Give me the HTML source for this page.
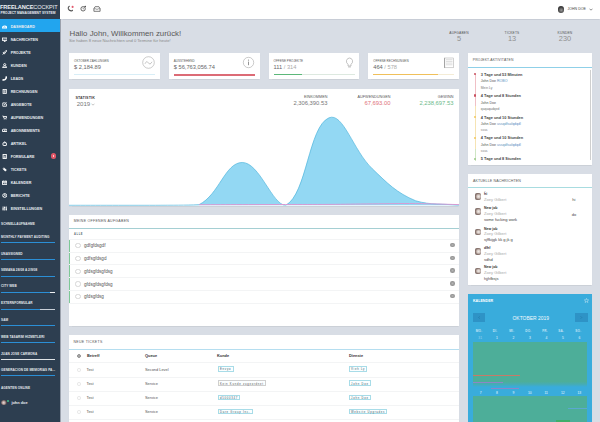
<!DOCTYPE html>
<html><head><meta charset="utf-8">
<style>
*{box-sizing:border-box;margin:0;padding:0}
html,body{width:600px;height:422px;overflow:hidden;background:#d8dde5;font-family:"Liberation Sans",sans-serif;color:#555}
.a{position:absolute;white-space:nowrap}
#side{position:absolute;left:0;top:0;width:59.6px;height:422px;background:#2d3e50;box-shadow:0.4px 0 0 #3a4352,1.4px 0 0 #dde2ea}
.logo1{left:0;top:4px;font-size:5.6px;color:#eef1f4;font-weight:bold;letter-spacing:-0.1px}
.logo2{left:0.5px;top:11.3px;font-size:3.3px;color:#e8ecf0;font-weight:bold}
.act{position:absolute;left:0;top:19px;width:60px;height:13px;background:#22a5ee}
.nav{left:10.7px;font-size:3.72px;font-weight:bold;color:#e9edf1;line-height:4px;margin-top:0.5px}
.ic{position:absolute;left:2px;width:4.5px;height:4px;border:0.9px solid #fff;border-radius:0.5px}
.pl{left:1px;font-size:3.1px;font-weight:bold;color:#e6eaee;line-height:3px;letter-spacing:0.1px}
.pb{position:absolute;left:1px;width:54px;height:1.2px;background:#2b8fd6}
#top{position:absolute;left:60px;top:0;width:540px;height:18.9px;background:#fff;box-shadow:0 0.5px 1px rgba(60,70,90,0.10)}
.card{position:absolute;background:#fff;box-shadow:0 0.5px 1px rgba(0,0,0,0.06)}
.lbl{font-size:3px;color:#555;letter-spacing:0.05px}
.val{font-size:5.7px;color:#666;margin-top:0.8px}
.bar{position:absolute;height:1px}
.hdr{font-size:3.2px;color:#555;letter-spacing:0.15px}
.hline{position:absolute;left:0;right:0;height:0.8px;background:#8fd0e8}
.row{position:absolute;left:0;right:0;height:0.5px;background:#f3f4f5}
.tt{font-size:4.6px;color:#555;line-height:5px;margin-top:-0.8px}
.chk{position:absolute;width:5.3px;height:5.3px;border:0.45px solid #d6d6d6;border-radius:50%;margin:-0.6px 0 0 -0.6px}
.dot{position:absolute;width:4.4px;height:4.4px;border-radius:50%;background:radial-gradient(circle,#b5b5b5 0,#9a9a9a 45%,#8e8e8e 100%);margin:-0.8px 0 0 -0.6px}
.th{font-size:3.9px;color:#333;font-weight:bold;margin-top:0.2px}
.td{font-size:3.9px;color:#555;margin-top:-0.7px}
.badge{position:absolute;height:5.5px;border:0.45px solid #a8dce8;font-size:2.75px;color:#35606c;line-height:3px;padding:1.2px 1.3px 0;letter-spacing:0.72px;white-space:nowrap;margin-top:-1.3px;background:#fbfeff}
.msgn{font-size:3.5px;color:#333;font-weight:bold}
.msgs{font-size:4.1px;color:#aaa}
.msgt{font-size:4px;color:#444}
.av{position:absolute;width:6.2px;height:6.6px;border-radius:2px;background:radial-gradient(ellipse at 60% 50%,#f0ebe8 0,#d8ccc6 30%,#8a7670 62%,#5a4a46 100%)}
.calw{font-size:3.1px;color:#c6e5f6;font-weight:bold;margin-left:-0.8px;margin-top:-0.5px;letter-spacing:0.25px}
.cald{font-size:3.3px;color:#eef8fd;margin-top:-0.3px}
</style></head><body>

<div id="side">
  <div class="a logo1">FREELANCE<span style="font-weight:normal">COCKPIT</span></div>
  <div class="a logo2">PROJECT MANAGEMENT SYSTEM</div>
  <div class="act"></div>
  <div class="a nav" style="top:24px">DASHBOARD</div>
  <div class="a nav" style="top:37px">NACHRICHTEN</div>
  <div class="a nav" style="top:50px">PROJEKTE</div>
  <div class="a nav" style="top:63px">KUNDEN</div>
  <div class="a nav" style="top:76px">LEADS</div>
  <div class="a nav" style="top:89px">RECHNUNGEN</div>
  <div class="a nav" style="top:102px">ANGEBOTE</div>
  <div class="a nav" style="top:115px">AUFWENDUNGEN</div>
  <div class="a nav" style="top:128px">ABONNEMENTS</div>
  <div class="a nav" style="top:141px">ARTIKEL</div>
  <div class="a nav" style="top:154px">FORMULARE</div>
  <div class="a nav" style="top:167px">TICKETS</div>
  <div class="a nav" style="top:180px">KALENDER</div>
  <div class="a nav" style="top:193px">BERICHTE</div>
  <div class="a nav" style="top:206px">EINSTELLUNGEN</div>
  <div style="position:absolute;left:50.6px;top:153.2px;width:5.6px;height:5.6px;border-radius:50%;background:#e25768"><div style="position:absolute;left:2.5px;top:1.5px;width:0.6px;height:2.6px;background:#f6c8ce"></div></div>

  <svg style="position:absolute;left:2px;top:23.5px" width="5.4" height="5" viewBox="0 0 10 10" preserveAspectRatio="none"><path d="M1 8 A4 4 0 0 1 9 8 Z" fill="none" stroke="#fff" stroke-width="1.95"/><path d="M5 8 L7 4.5" stroke="#fff" stroke-width="1.50"/></svg>
  <svg style="position:absolute;left:2px;top:36.5px" width="5.4" height="5" viewBox="0 0 10 10" preserveAspectRatio="none"><rect x="0.8" y="2" width="8.4" height="5" fill="none" stroke="#fff" stroke-width="1.65"/><path d="M3.5 9 H6.5 M5 7 V9" stroke="#fff" stroke-width="1.50"/><path d="M2.5 5 L4 3.8 L5.5 4.8 L7.5 3.2" fill="none" stroke="#fff" stroke-width="1.05"/></svg>
  <svg style="position:absolute;left:2px;top:49.5px" width="5.4" height="5" viewBox="0 0 10 10" preserveAspectRatio="none"><path d="M2.5 7.5 L4 4.5 Q6.5 1.5 9 1 Q8.5 3.5 5.5 6 Z" fill="none" stroke="#fff" stroke-width="1.65"/><path d="M1 9 L3 7" stroke="#fff" stroke-width="1.50"/><path d="M1.5 5 L3.8 4.8 M5.2 6.2 L5 8.5" stroke="#fff" stroke-width="1.35"/></svg>
  <svg style="position:absolute;left:2px;top:62.5px" width="5.4" height="5" viewBox="0 0 10 10" preserveAspectRatio="none"><circle cx="5" cy="3.2" r="2" fill="none" stroke="#fff" stroke-width="1.65"/><path d="M1 9 Q1.5 5.8 5 5.8 Q8.5 5.8 9 9 Z" fill="none" stroke="#fff" stroke-width="1.65"/></svg>
  <svg style="position:absolute;left:2px;top:75.5px" width="5.4" height="5" viewBox="0 0 10 10" preserveAspectRatio="none"><path d="M0.6 9 Q0.2 6 2.6 5.9 L4 6.6 Q6 5.4 6.6 3.6 L6 2.2 Q6.2 0.4 9.4 0.8 Q9.9 5.4 6.9 7.9 Q3.8 10.4 0.6 9 Z" fill="#fff"/></svg>
  <svg style="position:absolute;left:2px;top:88.5px" width="5.4" height="5" viewBox="0 0 10 10" preserveAspectRatio="none"><rect x="2" y="1" width="6" height="8" fill="none" stroke="#fff" stroke-width="1.65"/><path d="M3.5 3.2 H6.5 M3.5 5 H6.5 M3.5 6.8 H6.5" stroke="#fff" stroke-width="1.20"/></svg>
  <svg style="position:absolute;left:2px;top:101.5px" width="5.4" height="5" viewBox="0 0 10 10" preserveAspectRatio="none"><path d="M7 1.8 H1.5 V8.5 H8.2 V4" fill="none" stroke="#fff" stroke-width="1.65"/><path d="M3.8 6.2 L8.8 1.2" stroke="#fff" stroke-width="1.80"/></svg>
  <svg style="position:absolute;left:2px;top:114.5px" width="5.4" height="5" viewBox="0 0 10 10" preserveAspectRatio="none"><path d="M0.8 2 H2.5 L3.5 6.5 H8 L9 3 H3" fill="none" stroke="#fff" stroke-width="1.65"/><circle cx="4" cy="8.3" r="0.9" fill="#fff"/><circle cx="7.5" cy="8.3" r="0.9" fill="#fff"/></svg>
  <svg style="position:absolute;left:2px;top:127.5px" width="5.4" height="5" viewBox="0 0 10 10" preserveAspectRatio="none"><path d="M0.8 4 Q0.8 2.5 2.5 2.5 H7.5 Q9.2 2.5 9.2 4 V7 H0.8 Z" fill="none" stroke="#fff" stroke-width="1.80"/><rect x="3.5" y="4.2" width="3" height="1.4" fill="#fff"/></svg>
  <svg style="position:absolute;left:2px;top:140.5px" width="5.4" height="5" viewBox="0 0 10 10" preserveAspectRatio="none"><rect x="1.8" y="3.5" width="6.4" height="5.5" rx="0.8" fill="none" stroke="#fff" stroke-width="1.80"/><path d="M3.5 3.5 V2.5 Q5 0.6 6.5 2.5 V3.5" fill="none" stroke="#fff" stroke-width="1.50"/></svg>
  <svg style="position:absolute;left:2px;top:153.5px" width="5.4" height="5" viewBox="0 0 10 10" preserveAspectRatio="none"><rect x="2" y="1" width="6" height="8" fill="none" stroke="#fff" stroke-width="1.80"/><path d="M3.5 4.5 H6.5" stroke="#fff" stroke-width="1.50"/><path d="M4 9 V6.8 H6 V9" fill="none" stroke="#fff" stroke-width="1.20"/></svg>
  <svg style="position:absolute;left:2px;top:166.5px" width="5.4" height="5" viewBox="0 0 10 10" preserveAspectRatio="none"><path d="M1 3.5 L3.5 1 L9 6 L6 9 Z" fill="#fff"/><circle cx="3.3" cy="3.3" r="0.7" fill="#2c3a4b"/></svg>
  <svg style="position:absolute;left:2px;top:179.5px" width="5.4" height="5" viewBox="0 0 10 10" preserveAspectRatio="none"><rect x="1" y="2.5" width="8" height="6.5" fill="none" stroke="#fff" stroke-width="1.65"/><path d="M1 4.5 H9" stroke="#fff" stroke-width="1.80"/><path d="M3 1 V3 M7 1 V3" stroke="#fff" stroke-width="1.35"/><rect x="3" y="5.8" width="4" height="1.2" fill="#fff"/></svg>
  <svg style="position:absolute;left:2px;top:192.5px" width="5.4" height="5" viewBox="0 0 10 10" preserveAspectRatio="none"><circle cx="5" cy="5" r="3.8" fill="none" stroke="#fff" stroke-width="1.65"/><path d="M5 5 L5 1.2 M5 5 L8.5 6.5 M5 5 L2 7.5" stroke="#fff" stroke-width="1.35"/></svg>
  <svg style="position:absolute;left:2px;top:205.5px" width="5.4" height="5" viewBox="0 0 10 10" preserveAspectRatio="none"><path d="M2 1 V9 M5 1 V9 M8 1 V9" stroke="#fff" stroke-width="1.65"/><path d="M1 6 H3 M4 3 H6 M7 6.5 H9" stroke="#fff" stroke-width="1.95"/></svg>
  <div class="a pl" style="top:222.6px">SCHNELLAUFNAHME</div>
  <div class="a pl" style="top:236.3px">MONTHLY PAYMENT AUDITING</div>
  <div class="pb" style="top:242px"></div>
  <div class="a pl" style="top:252.6px">UNASSIGNED</div>
  <div class="pb" style="top:259px"></div>
  <div class="a pl" style="top:269.1px">SEMANA 28/08 A 2/9/08</div>
  <div class="pb" style="top:275.6px"></div>
  <div class="a pl" style="top:285.3px">CITY WEB</div>
  <div class="pb" style="top:291.8px;background:linear-gradient(90deg,#2b8fd6 90%,#eef0f2 90%)"></div>
  <div class="a pl" style="top:302.3px">EXTERNFORMULAR</div>
  <div class="pb" style="top:309px;background:linear-gradient(90deg,#2b8fd6 73%,#c9d0d8 73%)"></div>
  <div class="a pl" style="top:319.0px">SAM</div>
  <div class="pb" style="top:325.2px"></div>
  <div class="a pl" style="top:336.1px">WEB TASARIM HIZMETLERI</div>
  <div class="pb" style="top:342.3px"></div>
  <div class="a pl" style="top:352.6px">JUAN JOSE CARMONA</div>
  <div class="pb" style="top:358.8px;background:#dfe3e6"></div>
  <div class="a pl" style="top:368.8px">GENERACION DE MEMORIAS PA...</div>
  <div class="pb" style="top:375.3px"></div>
  <div class="a pl" style="top:387.3px">AGENTEN ONLINE</div>
  <div style="position:absolute;left:1.2px;top:399.8px;width:5.6px;height:5.6px;border-radius:50%;background:radial-gradient(circle at 45% 55%,#e8dcd8 0,#bfa9a6 30%,#5a4a4c 65%,#2d3e50 100%)"></div>
  <div style="position:absolute;left:6.6px;top:399.6px;width:2px;height:2px;border-radius:50%;background:#3fbf8a"></div>
  <div class="a" style="top:400.6px;left:11.4px;font-size:3.9px;font-weight:bold;color:#e6e9ee;line-height:4px">john doe</div>
</div>

<div id="top">
  <svg style="position:absolute;left:6.5px;top:5px" width="8" height="7" viewBox="0 0 8 7"><path d="M2.3 1.3 Q0.9 1.9 1.3 3.7 Q2 5.5 4.1 5.9 Q5.2 6 5.5 5.2" fill="none" stroke="#505050" stroke-width="1.1" stroke-linecap="round"/><circle cx="5.6" cy="1.9" r="1.05" fill="#e25a6e"/></svg>
  <svg style="position:absolute;left:19.6px;top:5px" width="7" height="7" viewBox="0 0 7 7"><circle cx="3.1" cy="3.8" r="2.2" fill="none" stroke="#505050" stroke-width="0.85"/><path d="M3.1 2.7 V3.9 H3.9" fill="none" stroke="#505050" stroke-width="0.55"/><circle cx="5.2" cy="1.5" r="0.75" fill="#333"/></svg>
  <svg style="position:absolute;left:32.6px;top:5.6px" width="8" height="6" viewBox="0 0 8 6"><path d="M0.9 2.6 L2.1 0.7 H5.9 L7.1 2.6 V5.3 H0.9 Z" fill="none" stroke="#505050" stroke-width="0.75" stroke-linejoin="round"/><path d="M0.9 2.8 H2.7 Q4 4.1 5.3 2.8 H7.1" fill="none" stroke="#505050" stroke-width="0.6"/></svg>
  <div style="position:absolute;left:497.5px;top:6.3px;width:6.3px;height:6.3px;border-radius:50%;background:radial-gradient(circle at 55% 60%,#9a9a9a 0,#6a6a6a 30%,#3a3a3a 60%,#2a2a2a 100%)"></div>
  <div class="a" style="left:507.5px;top:7.4px;font-size:3.55px;color:#444">JOHN DOE</div>
  <svg style="position:absolute;left:529px;top:8px" width="4" height="3" viewBox="0 0 4 3"><path d="M0.5 0.7 L2 2.2 L3.5 0.7" fill="none" stroke="#444" stroke-width="0.6"/></svg>
</div>

<div class="a" style="left:69.6px;top:28.6px;font-size:7.85px;color:#585858">Hallo John, Willkommen zurück!</div>
<div class="a" style="left:69px;top:38.3px;font-size:4.15px;color:#8a8a8a">Sie haben 8 neue Nachrichten und 0 Termine für heute!</div>

<div class="a" style="left:448px;top:30.6px;width:22px;text-align:center;font-size:3.3px;letter-spacing:0.15px;color:#555">AUFGABEN</div>
<div class="a" style="left:448px;top:34px;width:22px;text-align:center;font-size:7.4px;color:#8f8f8f">5</div>
<div class="a" style="left:501px;top:30.6px;width:22px;text-align:center;font-size:3.3px;letter-spacing:0.15px;color:#555">TICKETS</div>
<div class="a" style="left:501px;top:34px;width:22px;text-align:center;font-size:7.4px;color:#8f8f8f">13</div>
<div class="a" style="left:554px;top:30.6px;width:22px;text-align:center;font-size:3.3px;letter-spacing:0.15px;color:#555">KUNDEN</div>
<div class="a" style="left:554px;top:34px;width:22px;text-align:center;font-size:7.4px;color:#8f8f8f">230</div>

<!-- stat cards -->
<div class="card" style="left:69px;top:53.2px;width:90.75px;height:26.2px">
  <div class="a lbl" style="left:5px;top:5.8px">OKTOBER ZAHLUNGEN</div>
  <div class="a val" style="left:5px;top:10.3px">$ 2,184.89</div>
  <div class="bar" style="left:5px;top:21px;width:81px;background:#d8eef7"></div>
  <svg style="position:absolute;left:73.4px;top:3px" width="13" height="13" viewBox="0 0 13 13"><circle cx="6.5" cy="6.5" r="5.8" fill="none" stroke="#999" stroke-width="0.5"/><path d="M3 7.8 Q4.6 4.2 6.3 6.8 Q8 9.6 10 5.8" fill="none" stroke="#999" stroke-width="0.55"/></svg>
</div>
<div class="card" style="left:168.75px;top:53.2px;width:90.75px;height:26.2px">
  <div class="a lbl" style="left:5px;top:5.8px">AUSSTEHEND</div>
  <div class="a val" style="left:5px;top:10.3px">$ 56,763,056.74</div>
  <div class="bar" style="left:5px;top:20.9px;width:81px;height:1.7px;background:#dc6b76"></div>
  <svg style="position:absolute;left:73.4px;top:2.9px" width="13" height="13" viewBox="0 0 13 13"><circle cx="6.5" cy="6.5" r="5.2" fill="none" stroke="#999" stroke-width="0.5"/><rect x="6.05" y="5.6" width="0.9" height="3.6" fill="#888"/><circle cx="6.5" cy="4.1" r="0.6" fill="#888"/></svg>
</div>
<div class="card" style="left:268.5px;top:53.2px;width:90.75px;height:26.2px">
  <div class="a lbl" style="left:5px;top:5.8px">OFFENE PROJEKTE</div>
  <div class="a val" style="left:5px;top:10.3px">111 <span style="color:#aaa">/ 314</span></div>
  <div class="bar" style="left:5px;top:21px;width:81px;background:#dde9e0"></div>
  <div class="bar" style="left:5px;top:20.7px;width:28px;height:1.3px;background:#5cb87a"></div>
  <svg style="position:absolute;left:74.6px;top:3.2px" width="13" height="13" viewBox="0 0 13 13"><path d="M5 10 V8.3 Q3 6.8 3.5 4.5 Q4.3 2 6.5 2 Q8.7 2 9.5 4.5 Q10 6.8 8 8.3 V10 Z M5.2 11 H7.8" fill="none" stroke="#888" stroke-width="0.5"/></svg>
</div>
<div class="card" style="left:368.25px;top:53.2px;width:90.75px;height:26.2px">
  <div class="a lbl" style="left:5px;top:5.8px">OFFENE RECHNUNGEN</div>
  <div class="a val" style="left:5px;top:10.3px">464 <span style="color:#aaa">/ 578</span></div>
  <div class="bar" style="left:5px;top:21px;width:81px;background:#f4ecd6"></div>
  <div class="bar" style="left:5px;top:20.7px;width:65px;height:1.3px;background:#f0c05a"></div>
  <svg style="position:absolute;left:74px;top:3px" width="13" height="13" viewBox="0 0 13 13"><rect x="2.3" y="2" width="9.4" height="9.8" fill="none" stroke="#999" stroke-width="0.45"/><path d="M2.6 2.2 V11.6" stroke="#999" stroke-width="0.9"/><path d="M4 3.7 H10.5 M4 5.4 H10.5 M4 7.1 H10.5 M4 8.8 H10.5" stroke="#aaa" stroke-width="0.4"/></svg>
</div>


<!-- chart card -->
<div class="card" style="left:69px;top:89.2px;width:390px;height:116.6px;overflow:hidden">
  <div class="a" style="left:6.4px;top:7.2px;font-size:3.7px;color:#444;font-weight:bold;letter-spacing:0.12px">STATISTIK</div>
  <div class="a" style="left:7.7px;top:10.6px;font-size:6.1px;color:#777">2019</div>
  <svg style="position:absolute;left:22.4px;top:13.5px" width="4" height="3" viewBox="0 0 4 3"><path d="M0.5 0.7 L2 2.2 L3.5 0.7" fill="none" stroke="#888" stroke-width="0.5"/></svg>
  <div class="a" style="left:208px;top:6.3px;width:50.5px;text-align:right;font-size:3.75px;letter-spacing:0.05px;color:#555">EINKOMMEN</div>
  <div class="a" style="left:208px;top:10.6px;width:50.5px;text-align:right;font-size:5.85px;color:#777">2,306,390.53</div>
  <div class="a" style="left:271px;top:6.3px;width:50.5px;text-align:right;font-size:3.75px;letter-spacing:0.05px;color:#555">AUFWENDUNGEN</div>
  <div class="a" style="left:271px;top:10.6px;width:50.5px;text-align:right;font-size:5.85px;color:#e0707a">67,693.00</div>
  <div class="a" style="left:334px;top:6.3px;width:50.5px;text-align:right;font-size:3.75px;letter-spacing:0.05px;color:#555">GEWINN</div>
  <div class="a" style="left:334px;top:10.6px;width:50.5px;text-align:right;font-size:5.85px;color:#6cb98a">2,238,697.53</div>
  <!--CHART--><svg style="position:absolute;left:0;top:0" width="390" height="116.6" viewBox="69 89 390 116.6"><path d="M69.00 205.30 C86.33 205.30 95.00 205.30 112.33 205.30 C129.67 205.30 138.33 205.30 155.67 205.30 C173.00 205.18 184.53 205.30 199.00 204.70 C219.20 194.73 225.06 162.38 242.33 162.50 C259.73 162.62 272.35 205.30 285.67 205.30 C307.02 194.29 308.43 126.46 329.00 117.80 C343.10 111.86 353.13 150.41 372.33 168.80 C387.79 183.61 396.50 192.73 415.67 200.80 C431.17 205.30 441.67 203.50 459.00 205.30 L459.00 205.30 L69.00 205.30 Z" fill="#93d8f3"/><path d="M69.00 205.30 C86.33 205.30 95.00 205.30 112.33 205.30 C129.67 205.30 138.33 205.30 155.67 205.30 C173.00 205.18 184.53 205.30 199.00 204.70 C219.20 194.73 225.06 162.38 242.33 162.50 C259.73 162.62 272.35 205.30 285.67 205.30 C307.02 194.29 308.43 126.46 329.00 117.80 C343.10 111.86 353.13 150.41 372.33 168.80 C387.79 183.61 396.50 192.73 415.67 200.80 C431.17 205.30 441.67 203.50 459.00 205.30" fill="none" stroke="#52b6dc" stroke-width="0.7"/><path d="M199.00 204.70 C216.33 204.66 225.00 204.64 242.33 204.60 C259.67 204.56 268.33 204.54 285.67 204.50 C303.00 204.46 311.67 204.52 329.00 204.40 C346.33 204.28 355.00 204.06 372.33 203.90 C389.67 203.74 398.34 203.46 415.67 203.60 C433.00 203.74 441.67 204.20 459.00 204.60" fill="none" stroke="#d79bd2" stroke-width="1"/></svg>
</div>

<!-- tasks card -->
<div class="card" style="left:69px;top:215px;width:390px;height:110.5px">
  <div class="a hdr" style="left:4.7px;top:4.4px;font-size:3.5px;letter-spacing:0.3px">MEINE OFFENEN AUFGABEN</div>
  <div class="hline" style="top:13px;height:1.1px;background:#a5cfd3"></div>
  <div class="a" style="left:5px;top:17.6px;font-size:2.6px;color:#5a6a70;letter-spacing:0.6px;font-weight:bold">ALLE</div>
  <div style="position:absolute;left:0;top:24.3px;width:1.4px;height:63.5px;background:#7ec897"></div>
  <div class="row" style="top:23.5px"></div>
  <div class="row" style="top:36.5px"></div>
  <div class="row" style="top:49.3px"></div>
  <div class="row" style="top:62px"></div>
  <div class="row" style="top:74.8px"></div>
  <div class="row" style="top:87.5px"></div>
  <div class="chk" style="left:6.8px;top:28.6px"></div>
  <div class="chk" style="left:6.8px;top:41.3px"></div>
  <div class="chk" style="left:6.8px;top:54.1px"></div>
  <div class="chk" style="left:6.8px;top:66.9px"></div>
  <div class="chk" style="left:6.8px;top:79.6px"></div>
  <div class="a tt" style="left:15px;top:29px">gdfgfdsgdf</div>
  <div class="a tt" style="left:15px;top:41.7px">gdfsgfdsgd</div>
  <div class="a tt" style="left:15px;top:54.5px">gfdsgfdsgfdsg</div>
  <div class="a tt" style="left:15px;top:67.3px">gfdsgfdsgfdsg</div>
  <div class="a tt" style="left:15px;top:80px">gfdsgfdsg</div>
  <div class="dot" style="left:382px;top:28.7px"></div>
  <div class="dot" style="left:382px;top:41.4px"></div>
  <div class="dot" style="left:382px;top:54.2px"></div>
  <div class="dot" style="left:382px;top:67px"></div>
  <div class="dot" style="left:382px;top:79.7px"></div>
</div>

<!-- tickets card -->
<div class="card" style="left:69px;top:335px;width:390px;height:90px">
  <div class="a hdr" style="left:4.5px;top:5px;font-size:3.5px;letter-spacing:0.3px">NEUE TICKETS</div>
  <div class="hline" style="top:13.5px;height:1.4px;background:#b5def0"></div>
  <svg style="position:absolute;left:7.9px;top:18.6px" width="4" height="4" viewBox="0 0 8 8"><circle cx="4" cy="4" r="2.9" fill="none" stroke="#333" stroke-width="1.2"/><path d="M2 4 H6" stroke="#333" stroke-width="1.1"/></svg>
  <div class="a th" style="left:18px;top:17.8px">Betreff</div>
  <div class="a th" style="left:76px;top:17.8px">Queue</div>
  <div class="a th" style="left:148px;top:17.8px">Kunde</div>
  <div class="a th" style="left:280px;top:17.8px">Dienste</div>
  <div class="row" style="top:27.3px"></div>
  <div class="row" style="top:41.6px"></div>
  <div class="row" style="top:55.8px"></div>
  <div class="row" style="top:70px"></div>
  <div class="row" style="top:84px"></div>
  <div style="position:absolute;left:8.2px;top:33.1px;width:3.6px;height:3.6px;border-radius:50%;border:0.45px solid #e6e6e6"></div>
  <div style="position:absolute;left:8.2px;top:47.1px;width:3.6px;height:3.6px;border-radius:50%;border:0.45px solid #e6e6e6"></div>
  <div style="position:absolute;left:8.2px;top:61.4px;width:3.6px;height:3.6px;border-radius:50%;border:0.45px solid #e6e6e6"></div>
  <div style="position:absolute;left:8.2px;top:75.4px;width:3.6px;height:3.6px;border-radius:50%;border:0.45px solid #e6e6e6"></div>
  <div class="a td" style="left:17.5px;top:32.6px">Test</div>
  <div class="a td" style="left:17.5px;top:46.8px">Test</div>
  <div class="a td" style="left:17.5px;top:61px">Test</div>
  <div class="a td" style="left:17.5px;top:75px">Test</div>
  <div class="a td" style="left:76px;top:32.6px">Second Level</div>
  <div class="a td" style="left:76px;top:46.8px">Service</div>
  <div class="a td" style="left:76px;top:61px">Service</div>
  <div class="a td" style="left:76px;top:75px">Service</div>
  <div class="badge" style="left:148.7px;top:32.5px">Envyo</div>
  <div class="badge" style="left:148.7px;top:46.7px;border-color:#cfcfcf;color:#555">Kein Kunde zugeordnet</div>
  <div class="badge" style="left:148.7px;top:60.9px">d5000347</div>
  <div class="badge" style="left:148.7px;top:74.9px">Dare Group Inc.</div>
  <div class="badge" style="left:279.8px;top:32.5px">Vieh Ly</div>
  <div class="badge" style="left:279.8px;top:46.7px">John Doe</div>
  <div class="badge" style="left:279.8px;top:60.9px">John Doe</div>
  <div class="badge" style="left:279.8px;top:74.9px">Website Upgrades</div>
</div>

<!-- right column -->
<div class="card" style="left:468px;top:53.4px;width:124px;height:111.3px">
  <div class="a hdr" style="left:4.8px;top:4.7px;font-size:3.4px;letter-spacing:0.12px">PROJEKT-AKTIVITÄTEN</div>
  <div class="hline" style="top:13.4px;background:#8fd0e8"></div>
  <div style="position:absolute;left:121.8px;top:17px;width:0.8px;height:89.5px;background:#cfcfcf"></div>
  <div style="position:absolute;left:6.6px;top:21px;width:0.5px;height:32px;background:#f0c0c6"></div>
  <div style="position:absolute;left:6.6px;top:53px;width:0.5px;height:43px;background:#f6e4b4"></div>
  <div style="position:absolute;left:6.6px;top:96px;width:0.5px;height:12px;background:#cfe6c4"></div>
  <div style="position:absolute;left:5.75px;top:19.8px;width:2.2px;height:2.2px;border-radius:50%;background:#c9505f"></div>
  <div style="position:absolute;left:5.75px;top:41.1px;width:2.2px;height:2.2px;border-radius:50%;background:#c9505f"></div>
  <div style="position:absolute;left:5.75px;top:62.4px;width:2.2px;height:2.2px;border-radius:50%;background:#f0c860"></div>
  <div style="position:absolute;left:5.75px;top:83.2px;width:2.2px;height:2.2px;border-radius:50%;background:#f0c860"></div>
  <div style="position:absolute;left:5.75px;top:104.3px;width:2.2px;height:2.2px;border-radius:50%;background:#9bc98a"></div>
  <div class="a" style="left:12.8px;top:19.6px;font-size:3.9px;line-height:4px;color:#444;font-weight:bold">3 Tage und 53 Minuten</div>
  <div class="a" style="left:12.8px;top:26.0px;font-size:3.55px;line-height:4px;color:#555">John Doe <span style="color:#5a8fc0">ROBO</span></div>
  <div class="a" style="left:12.8px;top:32.2px;font-size:3.35px;line-height:4px;color:#777">Mein Ly</div>
  <div class="a" style="left:12.8px;top:40.9px;font-size:3.9px;line-height:4px;color:#444;font-weight:bold">4 Tage und 8 Stunden</div>
  <div class="a" style="left:12.8px;top:47.3px;font-size:3.55px;line-height:4px;color:#555">John Doe</div>
  <div class="a" style="left:12.8px;top:53.5px;font-size:3.35px;line-height:4px;color:#777">qaqaqadqed</div>
  <div class="a" style="left:12.8px;top:62.3px;font-size:3.9px;line-height:4px;color:#444;font-weight:bold">4 Tage und 10 Stunden</div>
  <div class="a" style="left:12.8px;top:68.7px;font-size:3.55px;line-height:4px;color:#555">John Doe <span style="color:#5a8fc0">ussqdfsafqdqdl</span></div>
  <div class="a" style="left:12.8px;top:74.9px;font-size:3.35px;line-height:4px;color:#777">ssss</div>
  <div class="a" style="left:12.8px;top:83.0px;font-size:3.9px;line-height:4px;color:#444;font-weight:bold">4 Tage und 10 Stunden</div>
  <div class="a" style="left:12.8px;top:89.4px;font-size:3.55px;line-height:4px;color:#555">John Doe <span style="color:#5a8fc0">ussqdfsafqdqdl</span></div>
  <div class="a" style="left:12.8px;top:95.6px;font-size:3.35px;line-height:4px;color:#777">ssss</div>
  <div class="a" style="left:12.8px;top:104.1px;font-size:3.9px;line-height:4px;color:#444;font-weight:bold">5 Tage und 8 Stunden</div>
</div>

<div class="card" style="left:468px;top:173.8px;width:124px;height:111px">
  <div class="a hdr" style="left:5px;top:4.8px;font-size:3.6px;letter-spacing:0.12px">AKTUELLE NACHRICHTEN</div>
  <div class="hline" style="top:13.4px;background:#a8dce0"></div>
  <div class="av" style="left:7px;top:19.7px"></div>
  <div class="av" style="left:7px;top:34.2px"></div>
  <div class="av" style="left:7px;top:54.8px"></div>
  <div class="av" style="left:7px;top:74.3px"></div>
  <div class="av" style="left:7px;top:93.9px"></div>
  <div class="a msgt" style="left:16.0px;top:15.70px;line-height:5px;font-size:2.4px">:)</div>
  <div class="a msgn" style="left:16.0px;top:18.20px;line-height:5px">hi</div>
  <div class="a msgs" style="left:16.0px;top:23.20px;line-height:5px">Zoey Gilbert</div>
  <div class="a msgn" style="left:16.0px;top:32.70px;line-height:5px">New job</div>
  <div class="a msgs" style="left:16.0px;top:37.70px;line-height:5px">Zoey Gilbert</div>
  <div class="a msgt" style="left:16.0px;top:43.50px;line-height:5px">some fucking work</div>
  <div class="a msgn" style="left:16.0px;top:53.20px;line-height:5px">New job</div>
  <div class="a msgs" style="left:16.0px;top:57.70px;line-height:5px">Zoey Gilbert</div>
  <div class="a msgt" style="left:16.0px;top:63.50px;line-height:5px">sjffkijgk kk g jk g</div>
  <div class="a msgn" style="left:16.0px;top:72.50px;line-height:5px">dlhf</div>
  <div class="a msgs" style="left:16.0px;top:77.50px;line-height:5px">Zoey Gilbert</div>
  <div class="a msgt" style="left:16.0px;top:83.30px;line-height:5px">sdhd</div>
  <div class="a msgn" style="left:16.0px;top:91.70px;line-height:5px">New job</div>
  <div class="a msgs" style="left:16.0px;top:96.70px;line-height:5px">Zoey Gilbert</div>
  <div class="a msgt" style="left:16.0px;top:102.50px;line-height:5px">hjjhfbsjs</div>
  <div class="a msgt" style="left:104.3px;top:23.30px;line-height:5px">hi</div>
  <div class="a msgt" style="left:103.8px;top:38.40px;line-height:5px">do</div>
</div>

<div class="card" style="left:468px;top:294px;width:124.3px;height:130px;background:#39acdc">
  <div class="a" style="left:4.9px;top:5.4px;font-size:3.6px;color:#fff;font-weight:bold;letter-spacing:0.05px">KALENDER</div>
  <svg style="position:absolute;left:116px;top:4.1px" width="5" height="5" viewBox="0 0 10 10"><path d="M5 0.8 L6.2 3.8 L9.4 3.9 L6.9 5.9 L7.8 9.1 L5 7.3 L2.2 9.1 L3.1 5.9 L0.6 3.9 L3.8 3.8 Z" fill="none" stroke="#e8f4fb" stroke-width="0.8"/></svg>
  <div style="position:absolute;left:5px;top:19.2px;width:12px;height:8.8px;background:#2e93c6"><svg style="position:absolute;left:4.8px;top:3px" width="2.4" height="3" viewBox="0 0 4 5"><path d="M3 0.5 L1 2.5 L3 4.5" fill="none" stroke="#1f6f99" stroke-width="0.8"/></svg></div>
  <div style="position:absolute;left:107.3px;top:19.2px;width:12.3px;height:8.8px;background:#2e93c6"><svg style="position:absolute;left:5px;top:3px" width="2.4" height="3" viewBox="0 0 4 5"><path d="M1 0.5 L3 2.5 L1 4.5" fill="none" stroke="#1f6f99" stroke-width="0.8"/></svg></div>
  <div class="a" style="left:0;width:124px;text-align:center;top:21.5px;font-size:4.95px;color:#f4fafd;padding-left:1.5px">OKTOBER 2019</div>
  <div class="a calw" style="left:8.5px;top:35.8px">MO.</div>
  <div class="a calw" style="left:25.5px;top:35.8px">DI.</div>
  <div class="a calw" style="left:42px;top:35.8px">MI.</div>
  <div class="a calw" style="left:58px;top:35.8px">DO.</div>
  <div class="a calw" style="left:75px;top:35.8px">FR.</div>
  <div class="a calw" style="left:91px;top:35.8px">SA.</div>
  <div class="a calw" style="left:108px;top:35.8px">SO.</div>
  <div class="a cald" style="left:10.3px;top:42.5px;color:#9fd3ee">31</div>
  <div class="a cald" style="left:28px;top:42.5px">1</div>
  <div class="a cald" style="left:44.5px;top:42.5px">2</div>
  <div class="a cald" style="left:61px;top:42.5px">3</div>
  <div class="a cald" style="left:77.5px;top:42.5px">4</div>
  <div class="a cald" style="left:94px;top:42.5px">5</div>
  <div class="a cald" style="left:110.5px;top:42.5px">6</div>
  <div style="position:absolute;left:5px;top:48.2px;width:114.3px;height:45px;background:linear-gradient(180deg,#4dae99 0,#4dae99 88%,#45acb5 94%,#39acdc 100%)"></div>
  <div style="position:absolute;left:5px;top:80.6px;width:47px;height:1.3px;background:#c77a68"></div>
  <div style="position:absolute;left:5px;top:87.9px;width:29.5px;height:1.2px;background:#8c86c8"></div>
  <div style="position:absolute;left:23px;top:93.6px;width:28px;height:1px;background:#8c86c8"></div>
  <div class="a cald" style="left:11.8px;top:97.3px">7</div>
  <div class="a cald" style="left:28px;top:97.3px">8</div>
  <div class="a cald" style="left:44.5px;top:97.3px">9</div>
  <div class="a cald" style="left:60px;top:97.3px">10</div>
  <div class="a cald" style="left:76.5px;top:97.3px">11</div>
  <div class="a cald" style="left:93px;top:97.3px">12</div>
  <div class="a cald" style="left:109.5px;top:97.3px">13</div>
  <div style="position:absolute;left:5px;top:102.3px;width:114.3px;height:30px;background:#4dae99"></div>
  <div style="position:absolute;left:99.5px;top:114.2px;width:19.8px;height:1px;background:#5aa8d0"></div>
  <div style="position:absolute;left:88px;top:125.5px;width:13.5px;height:3px;background:#3fae6a"></div>
</div>
</body></html>
